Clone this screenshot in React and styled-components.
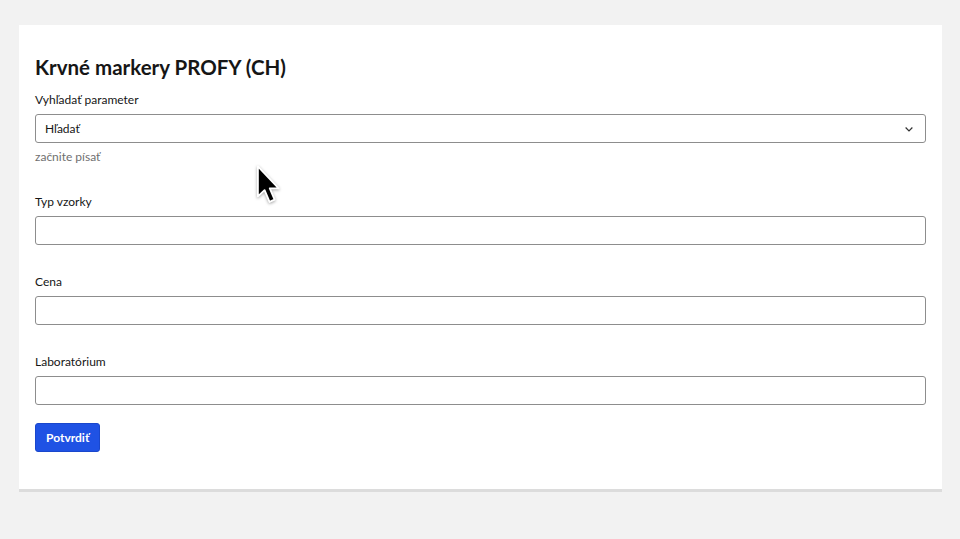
import styled, { createGlobalStyle } from 'styled-components';

const GlobalStyle = createGlobalStyle`
  html, body {
    margin: 0;
    padding: 0;
    background: #f2f2f2;
    font-family: Lato, "Noto Sans", sans-serif;
    color: #161616;
  }
`;

const fields = ['Typ vzorky', 'Cena', 'Laboratórium'];

function App() {
  return (
    <>
      <GlobalStyle />
      <Page>
        <Card>
          <Title>Krvné markery PROFY (CH)</Title>
          <Field>
            <Label>Vyhľadať parameter</Label>
            <SelectBox>
              <span>Hľadať</span>
              <svg width="12" height="12" viewBox="0 0 16 16" fill="none">
                <path d="M3.5 6l4.5 4.5L12.5 6" stroke="#333" strokeWidth="1.6" />
              </svg>
            </SelectBox>
            <Hint>začnite písať</Hint>
          </Field>
          {fields.map((f) => (
            <Field key={f} $spaced>
              <Label>{f}</Label>
              <Input />
            </Field>
          ))}
          <Button>Potvrdiť</Button>
        </Card>
        <Cursor width="30" height="44" viewBox="0 0 26 38">
          <path
            d="M2.5 2 L2.5 28 L8.3 22.6 L12.6 32.8 L17 30.8 L12.8 21 L20.5 21 Z"
            fill="#000"
            stroke="#fff"
            strokeWidth="1.6"
            strokeLinejoin="round"
          />
        </Cursor>
      </Page>
    </>
  );
}

const Page = styled.div`
  position: relative;
  width: 960px;
  height: 539px;
  padding: 25px 18px 0 19px;
  box-sizing: border-box;
`;

const Card = styled.div`
  background: #fff;
  border-bottom: 3px solid #dcdcdc;
  padding: 29px 16px 37px 16px;
  display: flex;
  flex-direction: column;
  align-items: flex-start;
`;

const Title = styled.h1`
  margin: 0 0 12px;
  font-size: 20.5px;
  font-weight: 700;
  line-height: 26px;
`;

const Field = styled.div`
  width: 100%;
  display: flex;
  flex-direction: column;
  margin-top: ${(p) => (p.$spaced ? '29px' : '0')};
`;

const Label = styled.label`
  font-size: 12px;
  line-height: 16px;
  color: #161616;
  margin-bottom: 6px;
`;

const SelectBox = styled.div`
  height: 29px;
  box-sizing: border-box;
  border: 1px solid #8d8d8d;
  border-radius: 3px;
  display: flex;
  align-items: center;
  justify-content: space-between;
  padding: 0 10px 0 9px;
  font-size: 12px;
  color: #161616;
`;

const Hint = styled.div`
  font-size: 12px;
  line-height: 16px;
  color: #6f6f6f;
  margin-top: 6px;
`;

const Input = styled.input`
  height: 29px;
  box-sizing: border-box;
  border: 1px solid #8d8d8d;
  border-radius: 3px;
  width: 100%;
  font: inherit;
  background: #fff;
`;

const Button = styled.button`
  margin-top: 18px;
  height: 29px;
  padding: 0 10px;
  background: #1f52e4;
  color: #fff;
  border: 1px solid #1a47cc;
  border-radius: 3px;
  font-family: inherit;
  font-size: 12px;
  font-weight: 700;
`;

const Cursor = styled.svg`
  position: absolute;
  left: 255px;
  top: 164px;
  filter: drop-shadow(0 1px 1.5px rgba(0, 0, 0, 0.35));
`;

export default App;
